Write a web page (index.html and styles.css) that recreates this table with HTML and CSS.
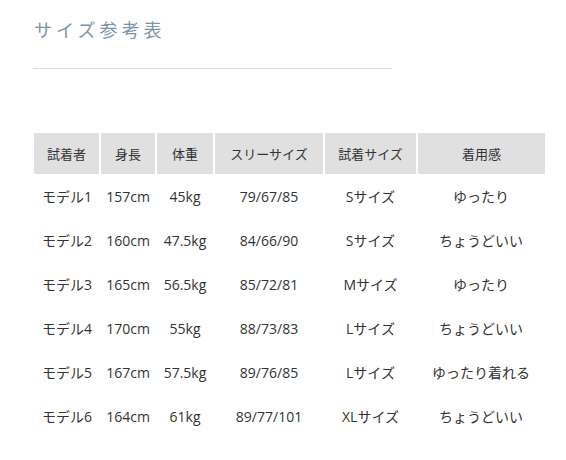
FILE: index.html
```html
<!DOCTYPE html>
<html lang="ja">
<head>
<meta charset="utf-8">
<link rel="stylesheet" href="styles.css">
</head>
<body>
<div class="page">
  <h2 class="title">サイズ参考表</h2>
  <hr class="rule">
  <table class="size-table">
    <colgroup>
      <col class="c1"><col class="c2"><col class="c3"><col class="c4"><col class="c5"><col class="c6">
    </colgroup>
    <thead>
      <tr><th>試着者</th><th>身長</th><th>体重</th><th>スリーサイズ</th><th>試着サイズ</th><th>着用感</th></tr>
    </thead>
    <tbody>
      <tr><td>モデル1</td><td>157cm</td><td>45kg</td><td>79/67/85</td><td>Sサイズ</td><td>ゆったり</td></tr>
      <tr><td>モデル2</td><td>160cm</td><td>47.5kg</td><td>84/66/90</td><td>Sサイズ</td><td>ちょうどいい</td></tr>
      <tr><td>モデル3</td><td>165cm</td><td>56.5kg</td><td>85/72/81</td><td>Mサイズ</td><td>ゆったり</td></tr>
      <tr><td>モデル4</td><td>170cm</td><td>55kg</td><td>88/73/83</td><td>Lサイズ</td><td>ちょうどいい</td></tr>
      <tr><td>モデル5</td><td>167cm</td><td>57.5kg</td><td>89/76/85</td><td>Lサイズ</td><td>ゆったり着れる</td></tr>
      <tr><td>モデル6</td><td>164cm</td><td>61kg</td><td>89/77/101</td><td>XLサイズ</td><td>ちょうどいい</td></tr>
    </tbody>
  </table>
</div>
</body>
</html>
```
FILE: styles.css
```css
html, body {
  margin: 0;
  padding: 0;
  background: #fff;
}
.page {
  padding: 17px 0 0 34px;
  font-family: "Open Sans", "Noto Sans CJK JP", sans-serif;
  color: #333;
}
.title {
  margin: 0;
  font-family: "Noto Sans CJK JP", sans-serif;
  font-weight: 400;
  font-size: 18px;
  line-height: 24px;
  letter-spacing: 4px;
  color: #7d93a9;
}
.rule {
  margin: 27px 0 0 -1px;
  width: 359px;
  height: 0;
  border: none;
  border-top: 1px solid #dcdcdc;
}
.size-table {
  margin-top: 64px;
  border-collapse: collapse;
  table-layout: fixed;
  width: 511px;
  font-size: 14px;
}
.c1 { width: 66px; }
.c2 { width: 56px; }
.c3 { width: 58px; }
.c4 { width: 110px; }
.c5 { width: 93px; }
.c6 { width: 128px; }
.size-table th {
  height: 41px;
  padding: 0;
  background: #e0e0e0;
  border-left: 2px solid #fff;
  font-weight: 400;
  font-family: "Noto Sans CJK JP", sans-serif;
  font-size: 13px;
  text-align: center;
  color: #333;
}
.size-table th:first-child { border-left: none; }
.size-table td {
  height: 44px;
  padding: 0;
  text-align: center;
  white-space: nowrap;
}
```
